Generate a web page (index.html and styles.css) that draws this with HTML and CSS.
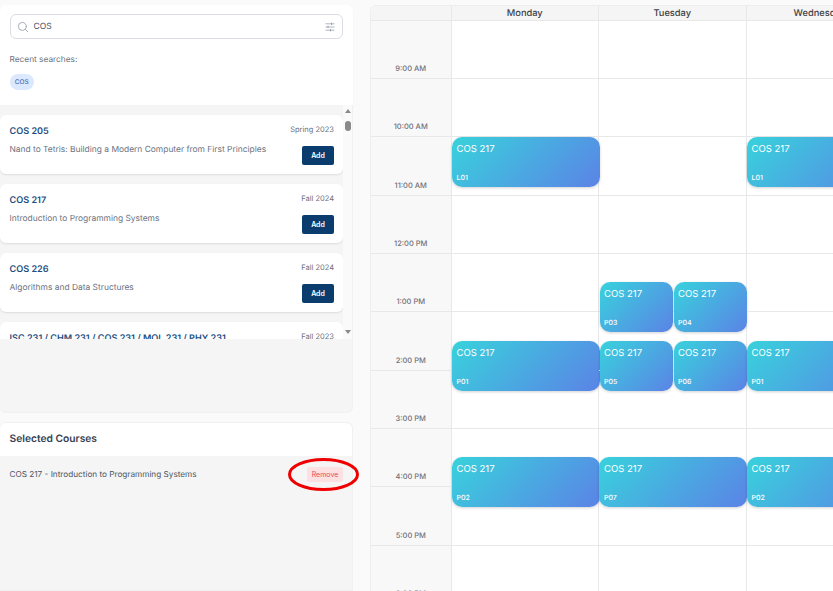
FILE: index.html
```html
<!DOCTYPE html>
<html lang="en">
<head>
    <meta charset="UTF-8">
    <meta name="viewport" content="width=device-width, initial-scale=1.0">
    <title>Course Planner</title>
    <link rel="stylesheet" href="styles.css">
</head>
<body>
    <div class="sidebar">
        <div class="search-panel">
            <div class="search-box">
                <svg class="search-icon" width="12" height="12" viewBox="0 0 12 12" fill="none" stroke="#9ca3af" stroke-width="0.9" stroke-linecap="round"><circle cx="5.4" cy="5.4" r="4"/><path d="M8.4 8.4l2.4 2.4"/></svg>
                <span class="search-text">COS</span>
                <svg class="filter-icon" width="10" height="10" viewBox="0 0 10 10" fill="none" stroke="#9ca3af" stroke-width="0.8"><path d="M0.5 1.8h9M0.5 5h9M0.5 8.2h9"/><path d="M6.5 0.6v2.4M3 3.8v2.4M5.5 7v2.4" stroke-width="1"/></svg>
            </div>
            <p class="recent-label">Recent searches:</p>
            <span class="chip">COS</span>
        </div>

        <div class="results-panel">
            <div class="results-scroll">
                <ul class="course-list">
                    <li class="course-card">
                        <div class="course-top"><span class="course-code">COS 205</span><span class="course-term">Spring 2023</span></div>
                        <div class="course-bottom"><span class="course-name">Nand to Tetris: Building a Modern Computer from First Principles</span><button class="add-btn" type="button">Add</button></div>
                    </li>
                    <li class="course-card">
                        <div class="course-top"><span class="course-code">COS 217</span><span class="course-term">Fall 2024</span></div>
                        <div class="course-bottom"><span class="course-name">Introduction to Programming Systems</span><button class="add-btn" type="button">Add</button></div>
                    </li>
                    <li class="course-card">
                        <div class="course-top"><span class="course-code">COS 226</span><span class="course-term">Fall 2024</span></div>
                        <div class="course-bottom"><span class="course-name">Algorithms and Data Structures</span><button class="add-btn" type="button">Add</button></div>
                    </li>
                    <li class="course-card">
                        <div class="course-top"><span class="course-code">ISC 231 / CHM 231 / COS 231 / MOL 231 / PHY 231</span><span class="course-term">Fall 2023</span></div>
                    </li>
                </ul>
                <div class="scrollbar">
                    <span class="arrow-up"></span>
                    <span class="thumb"></span>
                    <span class="arrow-down"></span>
                </div>
            </div>
        </div>

        <div class="selected-panel">
            <h3 class="selected-title">Selected Courses</h3>
            <div class="selected-body">
                <div class="selected-row">
                    <span class="selected-name">COS 217 - Introduction to Programming Systems</span>
                    <button class="remove-btn" type="button">Remove</button>
                    <svg class="remove-ring" width="74" height="36" viewBox="0 0 74 36" fill="none"><ellipse cx="36.5" cy="17.5" rx="34" ry="15" stroke="#ee0000" stroke-width="3"/></svg>
                </div>
            </div>
        </div>
    </div>

    <div class="calendar">
        <div class="cal-head">
            <div class="cal-corner"></div>
            <div class="cal-day-name">Monday</div>
            <div class="cal-day-name">Tuesday</div>
            <div class="cal-day-name">Wednesday</div>
        </div>
        <div class="cal-body">
            <div class="time-col">
                <div class="time-cell">9:00 AM</div>
                <div class="time-cell">10:00 AM</div>
                <div class="time-cell">11:00 AM</div>
                <div class="time-cell">12:00 PM</div>
                <div class="time-cell">1:00 PM</div>
                <div class="time-cell">2:00 PM</div>
                <div class="time-cell">3:00 PM</div>
                <div class="time-cell">4:00 PM</div>
                <div class="time-cell">5:00 PM</div>
                <div class="time-cell">6:00 PM</div>
            </div>
            <div class="day-col">
                <div class="event at-lecture"><span class="event-title">COS 217</span><span class="event-sec">L01</span></div>
                <div class="event at-two"><span class="event-title">COS 217</span><span class="event-sec">P01</span></div>
                <div class="event at-four"><span class="event-title">COS 217</span><span class="event-sec">P02</span></div>
            </div>
            <div class="day-col">
                <div class="event at-one half"><span class="event-title">COS 217</span><span class="event-sec">P03</span></div>
                <div class="event at-one half second"><span class="event-title">COS 217</span><span class="event-sec">P04</span></div>
                <div class="event at-two half"><span class="event-title">COS 217</span><span class="event-sec">P05</span></div>
                <div class="event at-two half second"><span class="event-title">COS 217</span><span class="event-sec">P06</span></div>
                <div class="event at-four"><span class="event-title">COS 217</span><span class="event-sec">P07</span></div>
            </div>
            <div class="day-col">
                <div class="event at-lecture"><span class="event-title">COS 217</span><span class="event-sec">L01</span></div>
                <div class="event at-two"><span class="event-title">COS 217</span><span class="event-sec">P01</span></div>
                <div class="event at-four"><span class="event-title">COS 217</span><span class="event-sec">P02</span></div>
            </div>
        </div>
    </div>
</body>
</html>
```
FILE: styles.css
```css
* {
    box-sizing: border-box;
}

html, body {
    height: 591px;
}

body {
    font-family: Inter, 'Noto Sans', sans-serif;
    text-rendering: geometricPrecision;
    margin: 0;
    display: flex;
    align-items: flex-start;
    gap: 17px;
    padding-top: 5px;
    overflow: hidden;
    background-color: #fafafa;
    color: #374151;
}

/* left column */
.sidebar {
    width: 353px;
    flex-shrink: 0;
}

.search-panel {
    height: 100px;
    padding: 9px 9.5px 0 9.5px;
    background-color: #fff;
    border-radius: 6px 6px 0 0;
    box-shadow: 0 1px 2px rgba(0, 0, 0, 0.06);
}

.search-box {
    display: flex;
    align-items: center;
    width: 333.5px;
    height: 25px;
    padding: 0 7px 0 6px;
    border: 1px solid #dcdce4;
    border-radius: 6px;
    background-color: #fff;
}

.search-icon {
    margin-right: 5px;
}

.search-text {
    flex: 1;
    font-size: 8.5px;
    color: #4b5563;
}

.recent-label {
    margin: 16px 0 0 0;
    font-size: 8.3px;
    line-height: 11px;
    color: #6b7280;
}

.chip {
    display: inline-block;
    margin-top: 8px;
    width: 24.5px;
    height: 16px;
    line-height: 16px;
    text-align: center;
    font-size: 6.5px;
    font-weight: 500;
    color: #4a6cb3;
    background-color: #dbe8fd;
    border-radius: 8px;
}

.results-panel {
    height: 308px;
    background-color: #f5f5f5;
    border-radius: 0 0 6px 6px;
    border-right: 1px solid #f0f0f0;
    border-bottom: 1px solid #f0f0f0;
}

.results-scroll {
    display: flex;
    height: 234px;
    overflow: hidden;
}

.course-list {
    list-style: none;
    margin: 0;
    padding: 10px 0 0 0;
    width: 343px;
    flex-shrink: 0;
}

.course-card {
    height: 59px;
    margin-bottom: 10px;
    padding: 9px 9px 0 9.5px;
    background-color: #fff;
    border-radius: 6px;
    box-shadow: 0 1px 2px rgba(0, 0, 0, 0.1);
}

.course-top {
    display: flex;
    justify-content: space-between;
}

.course-code {
    margin-top: 1px;
    font-size: 9.1px;
    line-height: 14px;
    font-weight: 600;
    color: #1d4f7f;
}

.course-term {
    font-size: 7.5px;
    line-height: 11px;
    color: #6b7280;
}

.course-bottom {
    display: flex;
    justify-content: space-between;
    align-items: flex-start;
}

.course-name {
    margin-top: 5px;
    font-size: 8.42px;
    line-height: 12px;
    color: #6b7280;
}

.add-btn {
    width: 32px;
    height: 19px;
    margin-top: 7px;
    padding: 0;
    border: none;
    border-radius: 2px;
    font-family: inherit;
    font-size: 7px;
    font-weight: 600;
    color: #fff;
    background-color: #0a3d6e;
}

.scrollbar {
    position: relative;
    flex: 1;
    background-color: #fafafa;
}

.thumb {
    position: absolute;
    top: 16px;
    left: 2px;
    width: 6px;
    height: 10px;
    border-radius: 3px;
    background-color: #8a8a8a;
}

.arrow-up,
.arrow-down {
    position: absolute;
    left: 2px;
    width: 0;
    height: 0;
    border-left: 3px solid transparent;
    border-right: 3px solid transparent;
}

.arrow-up {
    top: 4px;
    border-bottom: 4px solid #8a8a8a;
}

.arrow-down {
    bottom: 5px;
    border-top: 4px solid #8a8a8a;
}

.selected-panel {
    height: 169px;
    margin-top: 9px;
    border: 1px solid #f0f0f0;
    border-left: none;
    border-radius: 6px 6px 0 0;
    background-color: #f5f5f5;
}

.selected-title {
    margin: 0;
    height: 33px;
    padding-left: 9.5px;
    font-size: 10.25px;
    line-height: 33px;
    font-weight: 600;
    color: #374151;
    background-color: #fff;
    border-radius: 6px 6px 0 0;
}

.selected-row {
    position: relative;
    display: flex;
    justify-content: space-between;
    align-items: center;
    padding: 11px 9px 0 9.5px;
}

.selected-name {
    margin-bottom: 1px;
    font-size: 8.2px;
    color: #4b5563;
}

.remove-btn {
    width: 36px;
    height: 15px;
    padding: 0;
    border: none;
    border-radius: 2px;
    font-family: inherit;
    font-size: 7px;
    color: #ec4a5c;
    background-color: #fde0e2;
}

.remove-ring {
    position: absolute;
    top: 1px;
    left: 287px;
}

/* calendar */
.calendar {
    flex-shrink: 0;
    width: 463px;
    height: 586px;
    overflow: hidden;
    background-color: #fff;
    border-left: 1px solid #eee;
    border-radius: 6px 0 0 0;
}

.cal-head {
    display: flex;
    height: 15.8px;
    background-color: #f5f5f5;
    border-top: 1px solid #eee;
    border-bottom: 1px solid #e8e8e8;
}

.cal-corner {
    width: 80.5px;
    flex-shrink: 0;
    border-right: 1px solid #e8e8e8;
}

.cal-day-name {
    width: 147.5px;
    flex-shrink: 0;
    border-right: 1px solid #e8e8e8;
    font-size: 9.3px;
    font-weight: 500;
    line-height: 15px;
    text-align: center;
    color: #3f3f46;
}

.cal-body {
    display: flex;
}

.time-col {
    width: 80.5px;
    flex-shrink: 0;
    background-color: #f8f8f8;
    border-right: 1px solid #e8e8e8;
}

.time-cell {
    display: flex;
    align-items: flex-end;
    justify-content: center;
    height: 58.33px;
    padding-bottom: 5px;
    border-bottom: 1px solid #e8e8e8;
    font-size: 7.5px;
    font-weight: 500;
    color: #71717a;
}

.day-col {
    position: relative;
    width: 147.5px;
    flex-shrink: 0;
    height: 570px;
    border-right: 1px solid #e8e8e8;
    background-image: repeating-linear-gradient(to bottom, transparent -0.3px, transparent 57.03px, #e8e8e8 57.03px, #e8e8e8 58.03px);
}

.event {
    position: absolute;
    left: 0;
    width: 148px;
    height: 50px;
    display: flex;
    flex-direction: column;
    justify-content: space-between;
    padding: 6px 5px 5px 5px;
    border-radius: 10px;
    color: #fff;
    background: linear-gradient(135deg, #38d2dc, #5b83e6);
    box-shadow: 0 1px 3px rgba(0, 0, 0, 0.18);
}

.event.half {
    left: 0.5px;
    width: 73.5px;
    padding-left: 4.5px;
}

.event.second {
    left: 74.5px;
}

.at-lecture {
    top: 116.2px;
}

.at-one {
    top: 261.2px;
}

.at-two {
    top: 320.2px;
}

.at-four {
    top: 436.2px;
}

.event-title {
    font-size: 9.5px;
    line-height: 13px;
}

.event-sec {
    font-size: 7px;
    font-weight: 500;
    line-height: 9px;
}
```
